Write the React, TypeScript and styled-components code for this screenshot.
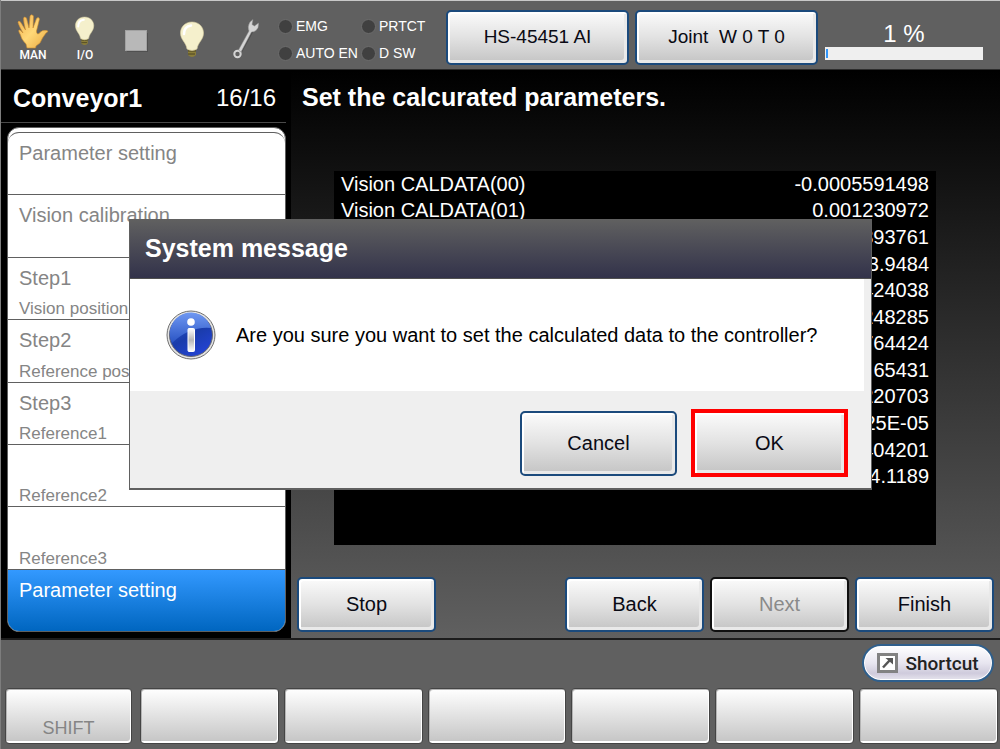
import React from "react";
import styled, { createGlobalStyle, css } from "styled-components";

const GlobalStyle = createGlobalStyle`
  *, *::before, *::after { box-sizing: border-box; }
  body { margin: 0; background: #606060; }
  body, button { font-family: "Liberation Sans", Arial, sans-serif; font-size: 20px; }
  h1, h2, p, ul, dl { margin: 0; padding: 0; }
  ul { list-style: none; }
`;

const Screen = styled.div`
  position: relative;
  display: flex;
  flex-direction: column;
  min-height: 100vh;
  border-left: 1px solid #7d7d7d;
`;

const keyFace = css`
  border: 2px solid #1b4a7c;
  border-radius: 5px;
  color: #0a0a14;
  background: linear-gradient(#fbfbfb, #e2e2e2 50%, #c4c4c4);
  box-shadow: inset 2px 2px 0 #ffffff, inset -3px -3px 0 #e9e9e9;
  cursor: pointer;
`;

const TopBar = styled.header`
  display: flex;
  align-items: center;
  height: 70px;
  padding: 4px 17px 0 6px;
  background: #606060;
  border-top: 1px solid #c8c8c8;
  border-bottom: 1px solid #2c2c2c;
`;

const IconCell = styled.div<{ $width: number }>`
  flex: none;
  display: flex;
  justify-content: center;
  width: ${(p) => p.$width}px;
`;

const Lamps = styled.ul`
  flex: none;
  display: grid;
  grid-template-columns: 83px 78px;
  row-gap: 10px;
  margin: 6px 7px 0;
`;

const Lamp = styled.li`
  display: flex;
  align-items: center;
  gap: 3px;
  color: #ffffff;
  font-size: 14px;
  line-height: 17px;
  white-space: nowrap;

  &::before {
    content: "";
    flex: none;
    width: 15px;
    height: 15px;
    border: 1px solid #6c6c6c;
    border-radius: 50%;
    background: #404040;
  }
`;

const TopKeys = styled.div`
  flex: 1;
  display: flex;
  gap: 6px;
`;

const TopKey = styled.button`
  ${keyFace}
  flex: 1;
  height: 55px;
  padding: 0;
  font-size: 19px;
  white-space: pre;
`;

const Speed = styled.div`
  flex: none;
  width: 158px;
  margin: 6px 0 0 7px;
  color: #ffffff;
  font-size: 24px;
  line-height: 26px;
  text-align: center;
`;

const SpeedLabel = styled.label`
  display: block;
`;

const SpeedBar = styled.progress`
  appearance: none;
  display: block;
  width: 100%;
  height: 13px;
  padding: 2px 1px;
  border: 0;
  background: #efefef;

  &::-webkit-progress-bar { background: #efefef; }
  &::-webkit-progress-value { background: #3296fa; }
`;

const Workspace = styled.div`
  flex: 1;
  display: grid;
  grid-template-columns: 290px 1fr;
`;

const Sidebar = styled.aside`
  display: flex;
  flex-direction: column;
  padding-bottom: 6px;
  background: #000000;
`;

const SidebarHead = styled.div`
  display: flex;
  align-items: center;
  justify-content: space-between;
  height: 53px;
  margin-right: 5px;
  padding: 4px 10px 0 12px;
  border-bottom: 1px solid #4a4a4a;
  color: #ffffff;
  font-size: 24px;
`;

const ScreenTitle = styled.h1`
  color: #ffffff;
  font-size: 25px;
  line-height: 30px;
`;

const Steps = styled.ul`
  flex: 1;
  display: flex;
  flex-direction: column;
  margin: 4px 5px 0 6px;
  padding-top: 4px;
  overflow: hidden;
  border: 1px solid #606060;
  border-radius: 12px;
  background: #ffffff;
`;

const Step = styled.li<{ $active?: boolean }>`
  flex: 1;
  display: flex;
  flex-direction: column;
  justify-content: space-between;
  padding: 8px 11px 0;
  border-top: 1px solid #606060;
  color: ${(p) => (p.$active ? "#ffffff" : "#858585")};
  background: ${(p) => (p.$active ? "linear-gradient(#3399ff, #0066c0)" : "#ffffff")};
  line-height: 24px;

  &:first-child { border-radius: 11px 11px 0 0; }
`;

const StepNote = styled.span`
  font-size: 17px;
  line-height: 20px;
`;

const Stage = styled.main`
  display: flex;
  flex-direction: column;
  padding: 12px 6px 6px;
  background: linear-gradient(#000000, #606060);
`;

const StageTitle = styled(ScreenTitle)`
  margin-left: 5px;
`;

const Results = styled.div`
  flex: 1;
  margin: 59px 58px 32px 37px;
  background: #000000;
`;

const ResultTable = styled.table`
  width: 100%;
  height: 319px;
  border-spacing: 0;
  color: #ffffff;

  th, td { padding: 0 7px; font-weight: normal; }
  th { text-align: left; }
  td { text-align: right; }
`;

const StageKeys = styled.div`
  display: flex;
  gap: 6px;
`;

const StageKey = styled.button<{ $first?: boolean }>`
  ${keyFace}
  width: 139px;
  height: 55px;
  margin-right: ${(p) => (p.$first ? "auto" : "0")};

  &:disabled { color: #8a8a8a; border-color: #101010; cursor: default; }
`;

const BottomBar = styled.footer`
  display: flex;
  flex-direction: column;
  gap: 6px;
  padding: 4px 2px 5px 4px;
  background: #606060;
  border-top: 2px solid #1c1c1c;
`;

const Shortcut = styled.button`
  align-self: flex-end;
  display: flex;
  align-items: center;
  justify-content: center;
  gap: 7px;
  width: 132px;
  height: 38px;
  margin-right: 4px;
  padding: 0;
  border: 2px solid #2f5f8c;
  border-radius: 19px;
  color: #222222;
  background: linear-gradient(#ffffff, #e8e6f0 50%, #cfcbdc 80%, #e6e4ee);
  box-shadow: inset 0 0 0 1px #ffffff;
  font-family: Roboto, sans-serif;
  font-size: 19px;
  font-weight: 500;
`;

const SoftKeys = styled.div`
  display: grid;
  grid-template-columns: 130px repeat(6, 1fr);
  gap: 5px;
`;

const SoftKey = styled.button<{ $shift?: boolean }>`
  height: 56px;
  margin-right: ${(p) => (p.$shift ? "3px" : "0")};
  padding: 24px 0 0;
  border: 1px solid #444444;
  border-radius: 4px;
  color: #858585;
  background: linear-gradient(#ffffff, #c4c4c4);
  box-shadow: inset -1px -2px 0 #ffffff, inset 1px 1px 0 #b4b4b4;
  font-size: 18px;
`;

const Overlay = styled.div`
  position: absolute;
  inset: 0;
  display: flex;
  align-items: center;
  justify-content: center;
  padding-bottom: 40px;
`;

const Dialog = styled.section`
  width: 743px;
  max-width: 100%;
  border: 1px solid #606060;
  border-bottom-width: 2px;
  background: #efefef;
`;

const DialogTitle = styled.h2`
  padding: 13px 15px 15px;
  border-bottom: 1px solid #505050;
  color: #ffffff;
  background: linear-gradient(#606060, #32324a);
  font-size: 25px;
  line-height: 30px;
`;

const DialogBody = styled.div`
  display: flex;
  align-items: center;
  gap: 20px;
  height: 112px;
  margin-right: 7px;
  padding-left: 36px;
  background: #ffffff;
  color: #000000;
`;

const DialogKeys = styled.div`
  display: flex;
  align-items: center;
  justify-content: flex-end;
  gap: 14px;
  padding: 18px 23px 11px;
`;

const DialogKey = styled.button<{ $marked?: boolean }>`
  ${keyFace}
  width: 157px;
  height: 65px;
  ${(p) =>
    p.$marked &&
    css`
      height: 68px;
      border: 4px solid #ff0000;
      border-radius: 0;
    `}
`;

const HandIcon = () => (
  <svg width="34" height="50" viewBox="0 0 34 50" role="img" aria-label="Manual mode">
    <defs>
      <linearGradient id="skin" x1="0" y1="0" x2="1" y2="1">
        <stop offset="0" stopColor="#f0b050" />
        <stop offset="0.5" stopColor="#ffd878" />
        <stop offset="1" stopColor="#e8a840" />
      </linearGradient>
    </defs>
    <g transform="translate(0 1)">
      <path
        d="M11 35 L10 31 Q5 26 4.500 22 Q1.500 17 3.500 17 Q4.500 17 7 20 Q3 13 2 9.500 Q2.500 7 4.500 9 L9.500 17 Q7.500 9 7.500 5 Q8.500 3 10.500 5 L13 15 L14 3 Q15.500 0.500 17.500 3 L17 15 L20.500 5.500 Q22.500 3.500 23.500 6 L20.500 18 Q20.500 22 23 20.500 Q26 16.500 31 17.500 Q33 18.500 30 20 Q26 25 24 30 L20 33 L19.500 35 Z"
        fill="url(#skin)"
        stroke="#c98a2e"
        strokeWidth="0.6"
      />
    </g>
    <text x="17" y="47" textAnchor="middle" fill="#fff" fontSize="12" fontWeight="500" fontFamily="Roboto, sans-serif">MAN</text>
  </svg>
);

const BulbShape = () => (
  <>
    <path d="M8 27 H16 V33 Q12 37 8 33 Z" fill="#8a7d38" />
    <path d="M8 29 H16 M8 32 H15" stroke="#4a4424" strokeWidth="1" />
    <path d="M12 0 C5 0 0.5 5 0.5 11 C0.5 18 6 20 7 27 Q12 30 17 27 C18 20 23.500 18 23.500 11 C23.500 5 19 0 12 0 Z" fill="#f5f0cc" stroke="#d8cfa0" strokeWidth="0.6" />
    <path d="M4 12 C4 7 7 4 11 3.500" stroke="#ffffff" strokeWidth="2.500" fill="none" strokeLinecap="round" />
  </>
);

const IoIcon = () => (
  <svg width="30" height="52" viewBox="0 0 30 52" role="img" aria-label="I/O">
    <g transform="translate(5 6) scale(0.8)">
      <BulbShape />
    </g>
    <text x="15" y="48" textAnchor="middle" fill="#fff" fontSize="12" fontWeight="500" fontFamily="Roboto, sans-serif">I/O</text>
  </svg>
);

const StopIcon = () => (
  <svg width="24" height="32" viewBox="0 0 24 32" role="img" aria-label="Stopped">
    <rect x="2" y="12" width="21" height="19" fill="#505050" />
    <rect x="0.500" y="9.500" width="21" height="20" fill="#b8b8b8" stroke="#a2a2a2" />
  </svg>
);

const BulbIcon = () => (
  <svg width="24" height="42" viewBox="0 0 24 42" role="img" aria-label="Motor lamp">
    <g transform="translate(0 6)">
      <BulbShape />
    </g>
  </svg>
);

const WrenchIcon = () => (
  <svg width="28" height="46" viewBox="0 0 28 46" role="img" aria-label="Maintenance">
    <g transform="translate(0 4)">
      <path d="M9 33 L20 13" fill="none" stroke="#4c4c4c" strokeWidth="3" />
      <circle cx="5.500" cy="36" r="3.200" fill="none" stroke="#d4d4d4" strokeWidth="2" />
      <path d="M6.500 32 L17 13 Q15 8 18 4 L21 1.500 L20 6.500 L22.500 8 L26.500 5 Q27 10 24 12.500 Q22 14 19.500 14 L9 34 Z" fill="#d4d4d4" stroke="#8c8c8c" strokeWidth="0.5" />
    </g>
  </svg>
);

const InfoIcon = () => (
  <svg width="50" height="50" viewBox="0 0 50 50" role="img" aria-label="Information">
    <defs>
      <linearGradient id="infoFace" x1="0.2" y1="0" x2="0.8" y2="1">
        <stop offset="0" stopColor="#2d5fd0" />
        <stop offset="0.5" stopColor="#1a3cab" />
        <stop offset="1" stopColor="#2444d8" />
      </linearGradient>
      <linearGradient id="infoGloss" x1="0" y1="0" x2="0" y2="1">
        <stop offset="0" stopColor="#6f98f2" />
        <stop offset="1" stopColor="#2a54c4" />
      </linearGradient>
      <linearGradient id="infoStem" x1="0" y1="0" x2="0" y2="1">
        <stop offset="0" stopColor="#ffffff" />
        <stop offset="0.5" stopColor="#b8b8b8" />
        <stop offset="1" stopColor="#ffffff" />
      </linearGradient>
    </defs>
    <circle cx="25" cy="25" r="24" fill="#e4e4e4" stroke="#707070" />
    <circle cx="25" cy="25" r="21.500" fill="url(#infoFace)" stroke="#6a6a72" />
    <path d="M6 33 A21 21 0 1 1 45 18 Q24 16 6 33 Z" fill="url(#infoGloss)" />
    <circle cx="25" cy="12" r="3.800" fill="#ffffff" />
    <rect x="22" y="18.500" width="6.500" height="23" rx="1" fill="url(#infoStem)" stroke="#ffffff" />
  </svg>
);

const ShortcutIcon = () => (
  <svg width="21" height="20" viewBox="0 0 21 20" aria-hidden="true">
    <rect x="1.500" y="1.500" width="18" height="17" fill="#ffffff" stroke="#828282" strokeWidth="3" />
    <path d="M6 14.500 L13 7" stroke="#555555" strokeWidth="2.500" />
    <path d="M8.500 5 H16 V11.500 Z" fill="#555555" />
  </svg>
);

const steps = [
  { name: "Parameter setting", note: "" },
  { name: "Vision calibration", note: "" },
  { name: "Step1", note: "Vision position" },
  { name: "Step2", note: "Reference pos" },
  { name: "Step3", note: "Reference1" },
  { name: "", note: "Reference2" },
  { name: "", note: "Reference3" },
  { name: "Parameter setting", note: "", active: true },
];

const results = [
  { label: "Vision CALDATA(00)", value: "-0.0005591498" },
  { label: "Vision CALDATA(01)", value: "0.001230972" },
  { label: "", value: "893761" },
  { label: "", value: "3.9484" },
  { label: "", value: "424038" },
  { label: "", value: "248285" },
  { label: "", value: "764424" },
  { label: "", value: ".65431" },
  { label: "", value: "220703" },
  { label: "", value: "25E-05" },
  { label: "", value: "404201" },
  { label: "", value: "4.1189" },
];

export default function App() {
  return (
    <Screen>
      <GlobalStyle />
      <TopBar>
        <IconCell $width={52}><HandIcon /></IconCell>
        <IconCell $width={52}><IoIcon /></IconCell>
        <IconCell $width={52}><StopIcon /></IconCell>
        <IconCell $width={58}><BulbIcon /></IconCell>
        <IconCell $width={50}><WrenchIcon /></IconCell>
        <Lamps>
          <Lamp>EMG</Lamp>
          <Lamp>PRTCT</Lamp>
          <Lamp>AUTO EN</Lamp>
          <Lamp>D SW</Lamp>
        </Lamps>
        <TopKeys>
          <TopKey type="button">HS-45451 AI</TopKey>
          <TopKey type="button">{"Joint  W 0 T 0"}</TopKey>
        </TopKeys>
        <Speed>
          <SpeedLabel htmlFor="speed">1 %</SpeedLabel>
          <SpeedBar id="speed" max={100} value={1} />
        </Speed>
      </TopBar>

      <Workspace>
        <Sidebar>
          <SidebarHead>
            <ScreenTitle>Conveyor1</ScreenTitle>
            <span>16/16</span>
          </SidebarHead>
          <Steps>
            {steps.map((s, i) => (
              <Step key={i} $active={s.active}>
                <span>{s.name}</span>
                <StepNote>{s.note}</StepNote>
              </Step>
            ))}
          </Steps>
        </Sidebar>

        <Stage>
          <StageTitle as="h2">Set the calcurated parameters.</StageTitle>
          <Results>
            <ResultTable>
              <tbody>
                {results.map((row, i) => (
                  <tr key={i}>
                    <th scope="row">{row.label}</th>
                    <td>{row.value}</td>
                  </tr>
                ))}
              </tbody>
            </ResultTable>
          </Results>
          <StageKeys>
            <StageKey type="button" $first>Stop</StageKey>
            <StageKey type="button">Back</StageKey>
            <StageKey type="button" disabled>Next</StageKey>
            <StageKey type="button">Finish</StageKey>
          </StageKeys>
        </Stage>
      </Workspace>

      <BottomBar>
        <Shortcut type="button"><ShortcutIcon />Shortcut</Shortcut>
        <SoftKeys>
          <SoftKey type="button" $shift>SHIFT</SoftKey>
          {[1, 2, 3, 4, 5, 6].map((n) => (
            <SoftKey key={n} type="button" aria-label={`F${n}`} />
          ))}
        </SoftKeys>
      </BottomBar>

      <Overlay>
        <Dialog role="dialog" aria-modal="true" aria-labelledby="dialog-title">
          <DialogTitle id="dialog-title">System message</DialogTitle>
          <DialogBody>
            <InfoIcon />
            <p>Are you sure you want to set the calculated data to the controller?</p>
          </DialogBody>
          <DialogKeys>
            <DialogKey type="button">Cancel</DialogKey>
            <DialogKey type="button" $marked>OK</DialogKey>
          </DialogKeys>
        </Dialog>
      </Overlay>
    </Screen>
  );
}
